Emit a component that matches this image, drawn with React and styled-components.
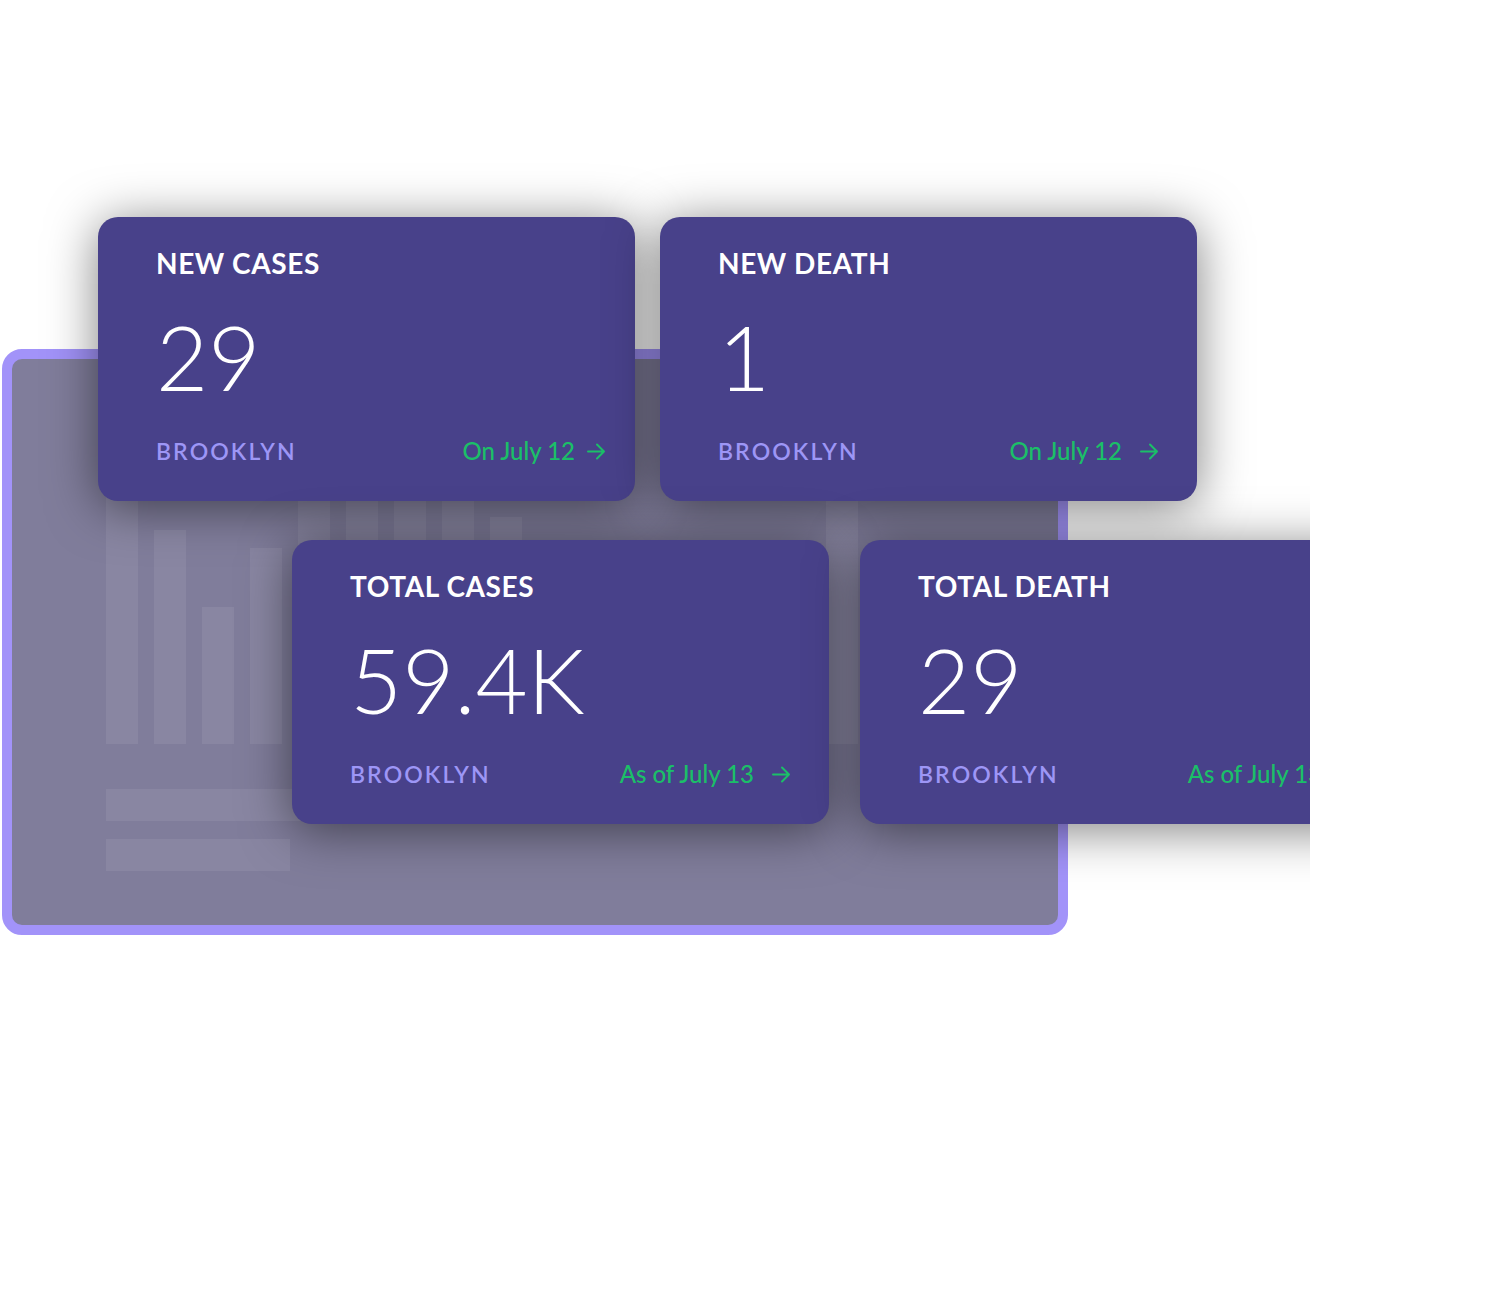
import React from "react";
import styled, { createGlobalStyle } from "styled-components";

const Global = createGlobalStyle`
  html, body { margin: 0; padding: 0; background: #ffffff; }
  body { font-family: Lato, "Open Sans", sans-serif; }
`;

const Stage = styled.div`
  width: 1310px;
  height: 1300px;
  overflow: hidden;
  display: grid;
  grid-template-areas: "stack";
`;

const Panel = styled.div`
  grid-area: stack;
  align-self: start;
  justify-self: start;
  margin: 349px 0 0 2px;
  width: 1066px;
  height: 586px;
  box-sizing: border-box;
  border: 10px solid #a293f9;
  border-radius: 20px;
  background: #807d9b;
  overflow: hidden;
  padding: 0 0 0 94px;
  display: flex;
  flex-direction: column;
`;

const Columns = styled.div`
  display: flex;
  align-items: flex-end;
  gap: 16px;
  height: 300px;
  margin-top: 85px;
`;

const Column = styled.div`
  width: 32px;
  flex-shrink: 0;
  background: rgba(255, 255, 255, 0.07);
`;

const Lines = styled.div`
  display: flex;
  flex-direction: column;
  gap: 18px;
  margin-top: 45px;
`;

const Line = styled.div`
  height: 32px;
  width: ${(p) => p.$w}px;
  background: rgba(255, 255, 255, 0.07);
`;

const CardLayer = styled.div`
  grid-area: stack;
  align-self: start;
  display: flex;
  flex-direction: column;
  gap: 39px;
  padding-top: 217px;
`;

const CardRow = styled.div`
  display: flex;
  gap: ${(p) => p.$gap}px;
  padding-left: ${(p) => p.$left}px;
`;

const Card = styled.div`
  flex-shrink: 0;
  width: 537px;
  height: 284px;
  box-sizing: border-box;
  border-radius: 20px;
  background: #48418a;
  box-shadow: 0 6px 50px rgba(0, 0, 0, 0.5);
  padding: 29px 38px 0 58px;
  display: flex;
  flex-direction: column;
`;

const Title = styled.div`
  font-family: Lato, sans-serif;
  font-weight: 700;
  font-size: 28px;
  line-height: 34px;
  letter-spacing: 0.6px;
  color: #ffffff;
  white-space: nowrap;
`;

const Value = styled.div`
  font-family: Lato, sans-serif;
  font-weight: 300;
  font-size: 90px;
  line-height: 92px;
  color: #ffffff;
  margin-top: 30px;
  white-space: nowrap;
`;

const Footer = styled.div`
  display: flex;
  align-items: center;
  justify-content: space-between;
  margin-top: 35px;
  height: 28px;
`;

const Place = styled.div`
  font-family: Lato, sans-serif;
  font-weight: 600;
  font-size: 23px;
  line-height: 28px;
  letter-spacing: 2.1px;
  color: #9d96f6;
`;

const DateLink = styled.div`
  display: flex;
  align-items: center;
  gap: ${(p) => p.$gap}px;
  font-family: Lato, sans-serif;
  font-weight: 500;
  font-size: 24px;
  line-height: 28px;
  color: #1bbf68;
  white-space: nowrap;
  margin-right: ${(p) => p.$mr}px;
`;

const Arrow = () => (
  <svg width="19" height="17" viewBox="0 0 19 17" fill="none">
    <path
      d="M1 8.5h16M10 1.5l7 7-7 7"
      stroke="#1bbf68"
      strokeWidth="2"
      strokeLinecap="round"
      strokeLinejoin="round"
    />
  </svg>
);

const columnHeights = [262, 214, 137, 196, 262, 262, 262, 250, 227, 150, 120, 180, 100, 160, 140, 262, 120, 90];

const StatCard = ({ title, value, date, arrowGap = 18, mr = 0 }) => (
  <Card>
    <Title>{title}</Title>
    <Value>{value}</Value>
    <Footer>
      <Place>BROOKLYN</Place>
      <DateLink $gap={arrowGap} $mr={mr}>
        {date}
        <Arrow />
      </DateLink>
    </Footer>
  </Card>
);

export default function App() {
  return (
    <>
      <Global />
      <Stage>
        <Panel>
          <Columns>
            {columnHeights.map((h, i) => (
              <Column key={i} style={{ height: h }} />
            ))}
          </Columns>
          <Lines>
            <Line $w={420} />
            <Line $w={184} />
          </Lines>
        </Panel>
        <CardLayer>
          <CardRow $left={98} $gap={25}>
            <StatCard title="NEW CASES" value="29" date="On July 12" arrowGap={12} mr={-9} />
            <StatCard title="NEW DEATH" value="1" date="On July 12" />
          </CardRow>
          <CardRow $left={292} $gap={31}>
            <StatCard title="TOTAL CASES" value="59.4K" date="As of July 13" />
            <StatCard title="TOTAL DEATH" value="29" date="As of July 13" />
          </CardRow>
        </CardLayer>
      </Stage>
    </>
  );
}
